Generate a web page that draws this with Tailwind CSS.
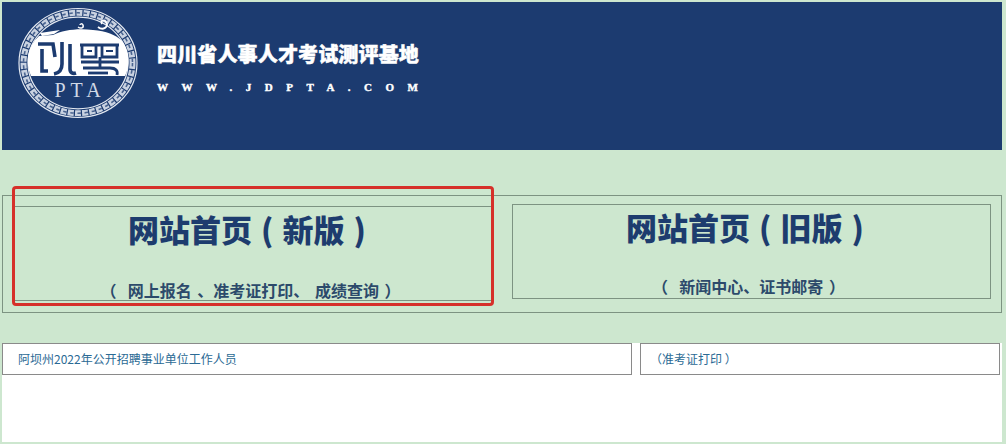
<!DOCTYPE html>
<html lang="zh-CN">
<head>
  <meta charset="UTF-8" />
  <meta name="viewport" content="width=device-width, initial-scale=1" />
  <title>四川省人事人才考试测评基地</title>
  <script src="https://cdn.jsdelivr.net/npm/@tailwindcss/browser@4"></script>
</head>
<body class="bg-[#cde7cf] h-[444px] overflow-hidden font-['Noto_Sans_CJK_SC','Liberation_Sans',sans-serif]">

  <div class="relative w-[1000px] ml-[2px] pt-[2px]">

    <!-- Header -->
    <header class="bg-[#1c3b70] h-[148px] flex items-start pl-[16px] pt-[5px]">
      <svg width="120" height="112" viewBox="0 0 120 112" class="shrink-0">
        <ellipse cx="60" cy="56" rx="59" ry="54.5" fill="none" stroke="#e4e9f1" stroke-width="1.2" />
        <ellipse cx="60" cy="56" rx="54.5" ry="50.2" fill="none" stroke="#c9d2e1" stroke-width="6" stroke-dasharray="6 1.2" />
        <ellipse cx="60" cy="56" rx="54.5" ry="50.2" fill="none" stroke="#4a6490" stroke-width="1.6" stroke-dasharray="3.5 3.7" />
        <ellipse cx="60" cy="56" rx="50" ry="45.8" fill="none" stroke="#e4e9f1" stroke-width="1.2" />
        <!-- white upper field -->
        <path d="M13 69 C7 55 9 40 21 29 L35 28 C45 23 60 21 75 23 C88 24 98 28 103 33 C113 44 112 60 107 69 Z" fill="#ffffff" />
        <path d="M22 26 L42 23 L36 27 L24 29 Z" fill="#ffffff" />
        <!-- cloud curls -->
        <path d="M60 20 C63 22 66 21 65 18 C64 16 62 17 62 18" fill="none" stroke="#ffffff" stroke-width="1.5" />
        <path d="M80 20 C85 24 91 20 88 15 C86 12 82 14 84 17" fill="none" stroke="#ffffff" stroke-width="1.8" />
        <!-- mark -->
        <g fill="none" stroke="#1c3b70" stroke-width="3.6">
          <path d="M20 37 H35 L37 50" />
          <path d="M24 42 V64 H30" />
          <path d="M44 35 V57 C44 63 41 66 36 67" />
          <path d="M52 37 V62 C52 66 55 67 58 66" />
        </g>
        <g fill="none" stroke="#1c3b70" stroke-width="2.8">
          <path d="M62 38 H101" />
          <path d="M64 38 V50 H78 V38" />
          <path d="M84 38 V50 H99 V38" />
          <path d="M69 44 H74 M88 44 H95" stroke-width="2" />
          <path d="M63 55 H101" />
          <path d="M82 50 V60" />
          <path d="M65 61 H92 C98 61 100 64 99 68" />
          <path d="M70 66 H90" />
        </g>
        <text x="62" y="90" text-anchor="middle" fill="#cfd8e6" font-family="Liberation Serif" font-size="20" letter-spacing="5">PTA</text>
      </svg>
      <div class="ml-[19px] mt-[33px] text-white">
        <h1 class="text-[20px] leading-[28px] tracking-[0.15px] font-black [-webkit-text-stroke:0.5px_white] whitespace-nowrap">四川省人事人才考试测评基地</h1>
        <p class="mt-[12px] text-[11px] leading-[14px] font-bold font-['Liberation_Serif',serif] [-webkit-text-stroke:0.4px_white] tracking-[13.5px] whitespace-nowrap">WWW.JDPTA.COM</p>
      </div>
    </header>

    <!-- Version links -->
    <section class="mt-[45px] h-[118px] border border-[#7d9382] flex items-start pl-[10px]">
      <a href="#" class="mt-[10px] w-[481px] h-[95px] border border-[#7d9382] flex flex-col items-center text-[#1d3c6e]">
        <span class="text-[31px] leading-[44px] font-black">网站首页<span class="mx-[9px]">(</span>新版<span class="ml-[9px] mr-[13px]">)</span></span>
        <span class="mt-[27px] pr-[6px] text-[16px] leading-[24px] font-bold text-[#2c4a6b] [word-spacing:2px]">（&nbsp; 网上报名 、准考证打印、 成绩查询 ）</span>
      </a>
      <a href="#" class="ml-[18px] mt-[8px] w-[479px] h-[95px] border border-[#7d9382] flex flex-col items-center text-[#1d3c6e]">
        <span class="text-[31px] leading-[44px] font-black">网站首页<span class="mx-[9px]">(</span>旧版<span class="ml-[9px] mr-[13px]">)</span></span>
        <span class="mt-[25px] pr-[6px] text-[16px] leading-[24px] font-bold text-[#2c4a6b] [word-spacing:2px]">（&nbsp; 新闻中心、证书邮寄 ）</span>
      </a>
    </section>

    <!-- Notice panel -->
    <section class="mt-[30px] h-[99px] bg-white">
      <div class="flex gap-[8px] w-[998px]">
        <div class="w-[630px] h-[32px] border border-[#8a8a8a] pl-[15px] flex items-center text-[12px] text-[#2b6a94]">阿坝州2022年公开招聘事业单位工作人员</div>
        <div class="w-[360px] h-[32px] border border-[#8a8a8a] pl-[9px] flex items-center text-[12px] text-[#2b6a94]">（准考证打印 ）</div>
      </div>
    </section>

    <!-- Red highlight drawn over the left link -->
    <div class="absolute left-[10px] top-[186px] w-[482px] h-[120px] border-[3px] border-[#d6302a] rounded-[4px] pointer-events-none"></div>
  </div>

</body>
</html>
